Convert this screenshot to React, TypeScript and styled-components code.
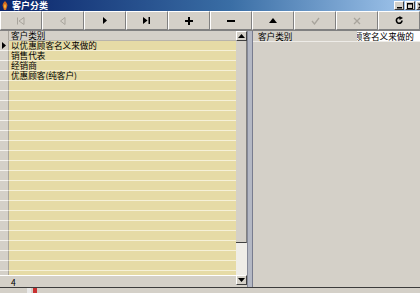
import React from "react";
import styled, { createGlobalStyle } from "styled-components";

const GlobalStyle = createGlobalStyle`
  html, body { margin: 0; padding: 0; background: #d4d0c8; overflow: hidden; }
  * { box-sizing: border-box; }
`;

const FONT = `"Noto Sans CJK SC", "DejaVu Sans", sans-serif`;

const Window = styled.div`
  width: 420px;
  height: 293px;
  display: flex;
  flex-direction: column;
  background: #d4d0c8;
  font-family: ${FONT};
  font-size: 8.6px;
  color: #000;
  overflow: hidden;
`;

const TitleBar = styled.div`
  height: 11px;
  flex: none;
  display: flex;
  align-items: center;
  padding-left: 2px;
  background: linear-gradient(90deg, #0a246a 0%, #3a6ea5 55%, #a6caf0 100%);
`;

const TitleText = styled.span`
  color: #fff;
  font-weight: bold;
  font-size: 9px;
  line-height: 11px;
  height: 11px;
  overflow: hidden;
  margin-left: 4px;
  flex: 1;
`;

const WinButtons = styled.div`
  display: flex;
  gap: 1px;
  margin-right: -6px;
`;

const WinButton = styled.div`
  width: 10px;
  height: 9px;
  background: #d4d0c8;
  border: 1px solid;
  border-color: #fff #404040 #404040 #fff;
  display: flex;
  align-items: center;
  justify-content: center;
`;

const Toolbar = styled.div`
  height: 20px;
  flex: none;
  display: flex;
  border-bottom: 1px solid #808080;
`;

const ToolButton = styled.div`
  flex: 1;
  display: flex;
  align-items: center;
  justify-content: center;
  border: 1px solid;
  border-color: #fff #808080 #808080 #fff;
  background: #d4d0c8;
`;

const Main = styled.div`
  flex: 1;
  display: flex;
  min-height: 0;
`;

const GridPane = styled.div`
  width: 247px;
  flex: none;
  display: flex;
  min-height: 0;
`;

const GridColumn = styled.div`
  flex: 1;
  display: flex;
  flex-direction: column;
  min-width: 0;
`;

const GridBody = styled.div`
  flex: 1;
  display: flex;
  flex-direction: column;
  overflow: hidden;
`;

const Row = styled.div`
  height: 10px;
  flex: none;
  display: flex;
`;

const Indicator = styled.div<{ $header?: boolean }>`
  width: 9px;
  flex: none;
  background: #d4d0c8;
  border-bottom: 1px solid ${(p) => (p.$header ? "#d4d0c8" : "#f4f2ee")};
  border-right: 1px solid #a8a49c;
  display: flex;
  align-items: center;
  justify-content: center;
`;

const Cell = styled.div<{ $header?: boolean }>`
  flex: 1;
  height: 10px;
  padding-left: 2px;
  line-height: 9px;
  background: ${(p) => (p.$header ? "#d4d0c8" : "#e6dba6")};
  border-bottom: 1px solid ${(p) => (p.$header ? "#b8b4ac" : "#f6f1d8")};
  white-space: nowrap;
  overflow: hidden;
`;

const Footer = styled.div`
  height: 12px;
  flex: none;
  display: flex;
  align-items: center;
  padding-left: 11px;
  border-top: 1px solid #fff;
  background: #d4d0c8;
  overflow: hidden;
`;

const ScrollBar = styled.div`
  width: 11px;
  flex: none;
  display: flex;
  flex-direction: column;
  padding-bottom: 2px;
`;

const ScrollArrow = styled.div`
  height: 10px;
  flex: none;
  background: #d4d0c8;
  border: 1px solid;
  border-color: #fff #404040 #404040 #fff;
  display: flex;
  align-items: center;
  justify-content: center;
`;

const ScrollThumb = styled.div`
  flex: 1;
  background: #d4d0c8;
  border-bottom: 1px solid #404040;
  border-right: 1px solid #808080;
`;

const ScrollTrack = styled.div`
  height: 32px;
  flex: none;
  background: #efede8;
`;

const Splitter = styled.div`
  width: 6px;
  flex: none;
  background: #b4b8c4;
  border-left: 1px solid #848898;
  border-right: 1px solid #787c8e;
`;

const DetailPane = styled.div`
  flex: 1;
  display: flex;
  flex-direction: column;
`;

const DetailRow = styled.div`
  height: 11px;
  display: flex;
  border-bottom: 1px solid #eeece8;
`;

const Label = styled.div`
  width: 104px;
  padding-left: 5px;
  line-height: 10px;
  height: 10px;
  overflow: hidden;
`;

const Field = styled.div`
  flex: 1;
  height: 10px;
  background: #fff;
  overflow: hidden;
  white-space: nowrap;
  line-height: 10px;
`;

const FieldText = styled.span`
  display: inline-block;
  margin-left: -29px;
`;

const BottomStrip = styled.div`
  height: 6px;
  flex: none;
  border-top: 1px solid #3c3c3c;
  background: #d4d0c8;
  display: flex;
  padding-left: 27px;
  gap: 2px;
`;

const TrayIcon = styled.div<{ $color: string }>`
  width: 4px;
  height: 5px;
  background: ${(p) => p.$color};
`;

const Tri = ({ dir, color = "#000" }: { dir: "l" | "r" | "u" | "d"; color?: string }) => {
  const pts: Record<string, string> = {
    r: "0,0 4,3.5 0,7",
    l: "4,0 0,3.5 4,7",
    u: "0,4 3.5,0 7,4",
    d: "0,0 7,0 3.5,4",
  };
  const horiz = dir === "l" || dir === "r";
  return (
    <svg width={horiz ? 4 : 7} height={horiz ? 7 : 4} viewBox={horiz ? "0 0 4 7" : "0 0 7 4"}>
      <polygon points={pts[dir]} fill={color} />
    </svg>
  );
};

const Icon = ({ kind }: { kind: string }) => {
  const dis = "#a8a49c";
  switch (kind) {
    case "first":
      return (
        <svg width="10" height="8" viewBox="0 0 10 8">
          <rect x="1" y="0.5" width="1" height="7" fill={dis} />
          <polygon points="8,0.5 3,4 8,7.5" fill="none" stroke={dis} strokeWidth="1" />
        </svg>
      );
    case "prior":
      return (
        <svg width="8" height="8" viewBox="0 0 8 8">
          <polygon points="6,0.5 1.5,4 6,7.5" fill="none" stroke={dis} strokeWidth="1" />
        </svg>
      );
    case "next":
      return <Tri dir="r" />;
    case "last":
      return (
        <svg width="8" height="7" viewBox="0 0 8 7">
          <polygon points="0,0 4.5,3.5 0,7" fill="#000" />
          <rect x="5.5" y="0" width="1.5" height="7" fill="#000" />
        </svg>
      );
    case "add":
      return (
        <svg width="8" height="8" viewBox="0 0 8 8">
          <rect x="3" y="0" width="2" height="8" fill="#000" />
          <rect x="0" y="3" width="8" height="2" fill="#000" />
        </svg>
      );
    case "del":
      return (
        <svg width="8" height="2" viewBox="0 0 8 2">
          <rect x="0" y="0" width="8" height="2" fill="#000" />
        </svg>
      );
    case "edit":
      return (
        <svg width="8" height="5" viewBox="0 0 8 5">
          <polygon points="0,5 4,0 8,5" fill="#000" />
        </svg>
      );
    case "post":
      return (
        <svg width="9" height="8" viewBox="0 0 9 8">
          <polyline points="1,4 3.5,7 8,1" fill="none" stroke={dis} strokeWidth="1.3" />
        </svg>
      );
    case "cancel":
      return (
        <svg width="8" height="8" viewBox="0 0 8 8">
          <path d="M1 1 L7 7 M7 1 L1 7" stroke={dis} strokeWidth="1.3" />
        </svg>
      );
    default:
      return (
        <svg width="9" height="9" viewBox="0 0 9 9">
          <path d="M7 4.5 A2.8 2.8 0 1 1 5.5 2" fill="none" stroke="#000" strokeWidth="1.6" />
          <polygon points="4.5,0 8,2 4.5,4" fill="#000" />
        </svg>
      );
  }
};

const tools = ["first", "prior", "next", "last", "add", "del", "edit", "post", "cancel", "refresh"];
const items = ["以优惠顾客名义来做的", "销售代表", "经销商", "优惠顾客(纯客户)"];

export default function App() {
  const rows = Array.from({ length: 26 }, (_, i) => items[i] ?? "");
  return (
    <Window>
      <GlobalStyle />
      <TitleBar>
        <svg width="6" height="9" viewBox="0 0 6 9">
          <path d="M3 0 C5 2 6 4 5 6 L4 9 L2 9 L1 6 C0 4 1 2 3 0Z" fill="#d2691e" />
          <path d="M3 3 C4 4 4 6 3 8 C2 6 2 4 3 3Z" fill="#ffd24a" />
        </svg>
        <TitleText>客户分类</TitleText>
        <WinButtons>
          <WinButton>
            <svg width="5" height="6" viewBox="0 0 5 6"><rect x="0" y="4" width="5" height="1.5" fill="#000" /></svg>
          </WinButton>
          <WinButton>
            <svg width="6" height="6" viewBox="0 0 6 6"><rect x="0.5" y="0.5" width="5" height="5" fill="none" stroke="#000" /><rect x="0" y="0" width="6" height="1.5" fill="#000" /></svg>
          </WinButton>
          <WinButton>
            <svg width="6" height="6" viewBox="0 0 6 6"><path d="M0.5 0.5 L5.5 5.5 M5.5 0.5 L0.5 5.5" stroke="#000" strokeWidth="1.3" /></svg>
          </WinButton>
        </WinButtons>
      </TitleBar>
      <Toolbar>
        {tools.map((t) => (
          <ToolButton key={t}>
            <Icon kind={t} />
          </ToolButton>
        ))}
      </Toolbar>
      <Main>
        <GridPane>
          <GridColumn>
            <GridBody>
              <Row>
                <Indicator $header />
                <Cell $header>客户类别</Cell>
              </Row>
              {rows.map((r, i) => (
                <Row key={i}>
                  <Indicator>{i === 0 && <Tri dir="r" />}</Indicator>
                  <Cell>{r}</Cell>
                </Row>
              ))}
            </GridBody>
            <Footer>4</Footer>
          </GridColumn>
          <ScrollBar>
            <ScrollArrow>
              <Tri dir="u" />
            </ScrollArrow>
            <ScrollThumb />
            <ScrollTrack />
            <ScrollArrow>
              <Tri dir="d" />
            </ScrollArrow>
          </ScrollBar>
        </GridPane>
        <Splitter />
        <DetailPane>
          <DetailRow>
            <Label>客户类别</Label>
            <Field>
              <FieldText>以优惠顾客名义来做的</FieldText>
            </Field>
          </DetailRow>
        </DetailPane>
      </Main>
      <BottomStrip>
        <TrayIcon $color="#e8e8e8" />
        <TrayIcon $color="#c83030" />
      </BottomStrip>
    </Window>
  );
}
